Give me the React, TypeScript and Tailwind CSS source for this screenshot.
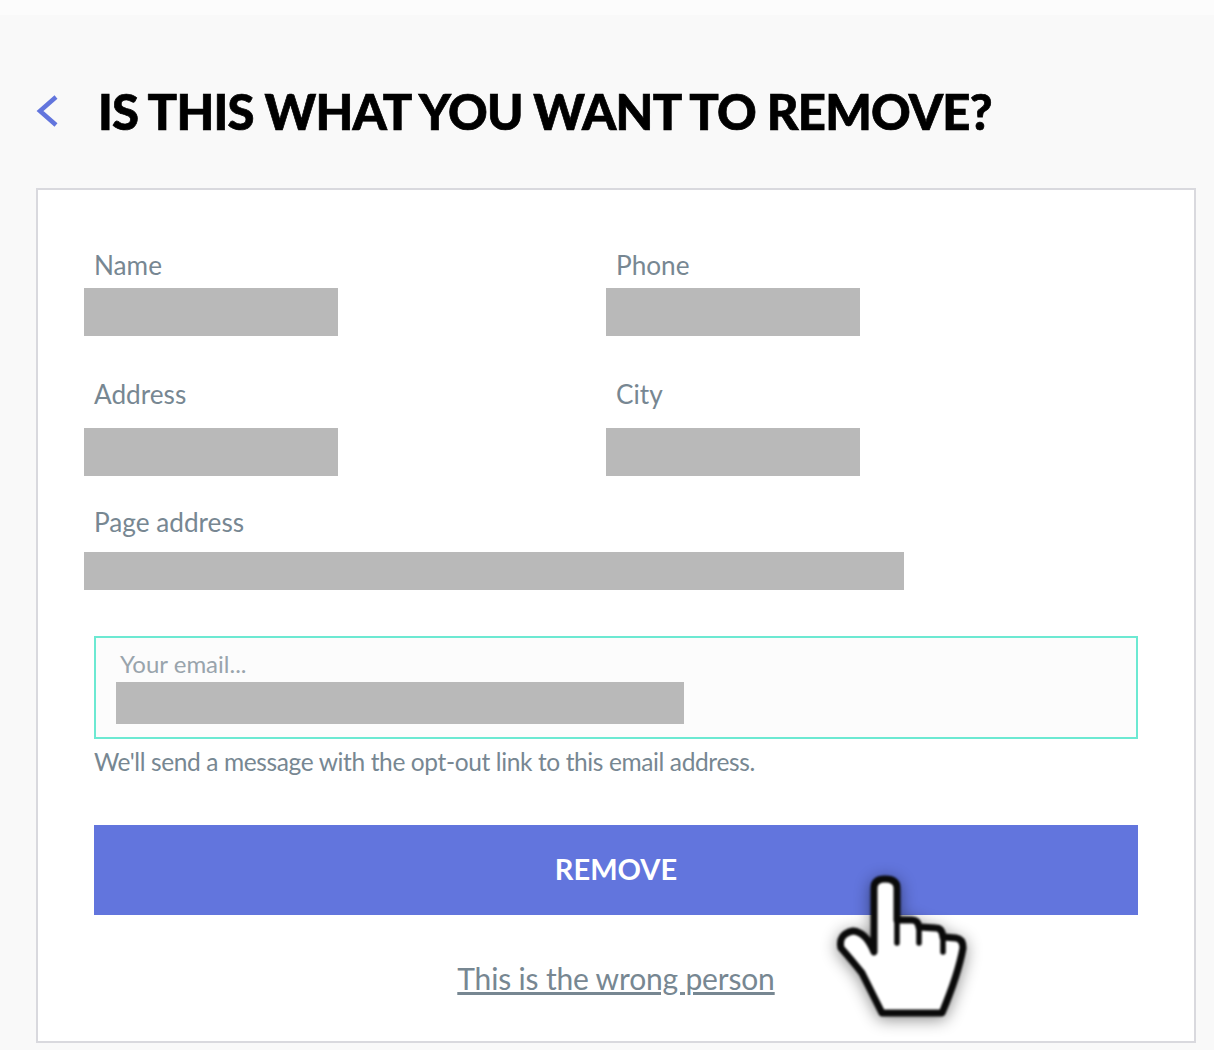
import React from 'react';

const labelClass = 'flex h-[38px] items-center pl-[10px] text-[26.2px] text-[#778792]';

const Field: React.FC<{ label: string; className?: string }> = ({ label, className }) => (
  <div className={className}>
    <div className={labelClass}>{label}</div>
  </div>
);

const Redacted: React.FC<{ className: string }> = ({ className }) => <div className={`bg-[#b9b9b9] ${className}`} />;

const HandCursor: React.FC = () => (
  <svg
    viewBox="0 0 170 170"
    className="absolute left-[782px] top-[670px] h-[170px] w-[170px] blur-[0.8px] drop-shadow-[0_3px_8px_rgba(0,0,0,0.45)]"
    fill="none"
  >
    <path
      d="M54 92 L54 28 Q54 19 65 19 Q77 19 77 28 L77 60 L92 60 Q98 60 99 67 L116 68 Q122 68 123 77 L136 78 Q143 79 143 88 Q138 115 122 153 L62 153 L42 113 Q30 98 21 88 Q18 74 33 71 Q46 72 54 92 Z"
      fill="#fff"
      stroke="#0a0a0a"
      strokeWidth="7"
      strokeLinejoin="round"
    />
    <path d="M77 60 L77 83 M99 67 L99 83 M123 77 L123 92" stroke="#0a0a0a" strokeWidth="5.5" strokeLinecap="round" />
  </svg>
);

export default function App() {
  return (
    <div className="h-[1050px] overflow-hidden bg-[#f9f9f9] font-['Lato',sans-serif]">
      <div className="h-[15px] bg-[#fcfcfc]" />

      {/* Title */}
      <div className="flex h-[173px] items-start pl-9 pt-[66px]">
        <svg viewBox="0 0 22 32" className="mt-[14px] h-8 w-[22px]" fill="none">
          <path d="M20 2 L4 16 L20 30" stroke="#6275dd" strokeWidth="4.5" />
        </svg>
        <h1 className="ml-[40px] text-[49px] leading-[60px] font-black tracking-[-0.8px] text-black [-webkit-text-stroke:0.7px_black]">
          IS THIS WHAT YOU WANT TO REMOVE?
        </h1>
      </div>

      {/* Card */}
      <div className="relative ml-9 h-[855px] w-[1160px] border-2 border-[#d9d9de] bg-white pl-[46px] pt-[57px]">
        <div className="grid grid-cols-[522px_1fr]">
          <div>
            <Field label="Name" className="mb-[3px]" />
            <Redacted className="h-12 w-[254px]" />
          </div>
          <div>
            <Field label="Phone" className="mb-[3px]" />
            <Redacted className="h-12 w-[254px]" />
          </div>
          <div className="mt-[40px]">
            <Field label="Address" className="mb-[14px]" />
            <Redacted className="h-12 w-[254px]" />
          </div>
          <div className="mt-[40px]">
            <Field label="City" className="mb-[14px]" />
            <Redacted className="h-12 w-[254px]" />
          </div>
        </div>

        <Field label="Page address" className="mb-[10px] mt-[28px]" />
        <Redacted className="h-[38px] w-[820px]" />

        <div className="ml-[10px] w-[1044px]">
          <div className="mt-[46px] h-[103px] border-2 border-[#6ce9d2] bg-[#fcfcfc] pl-5 pt-[8px]">
            <div className="flex h-9 items-center pl-1 text-[24px] text-[#99a4ac]">Your email...</div>
            <Redacted className="h-[42px] w-[568px]" />
          </div>
          <p className="mt-[5px] flex h-9 items-center text-[24.5px] tracking-[-0.38px] text-[#778792]">
            We'll send a message with the opt-out link to this email address.
          </p>
          <button className="mt-[45px] flex h-[90px] w-full items-center justify-center bg-[#6275dd] pb-[3px] text-[29px] font-bold text-white">
            REMOVE
          </button>
          <div className="mt-[43px] text-center">
            <a className="text-[30px] leading-10 tracking-[-0.17px] text-[#778792] underline">This is the wrong person</a>
          </div>
        </div>

        <HandCursor />
      </div>
    </div>
  );
}
